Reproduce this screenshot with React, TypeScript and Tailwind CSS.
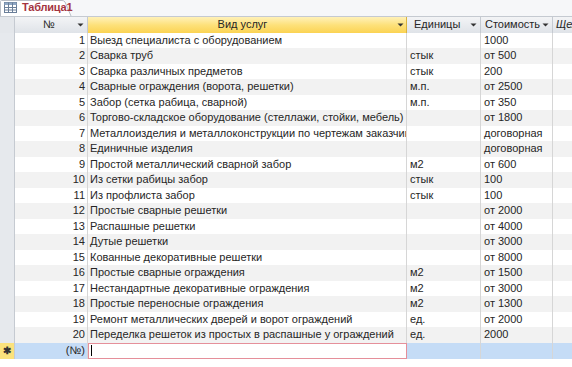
import React from "react";

const rows: [number, string, string, string][] = [
  [1, "Выезд специалиста с оборудованием", "", "1000"],
  [2, "Сварка труб", "стык", "от 500"],
  [3, "Сварка различных предметов", "стык", "200"],
  [4, "Сварные ограждения (ворота, решетки)", "м.п.", "от 2500"],
  [5, "Забор (сетка рабица, сварной)", "м.п.", "от 350"],
  [6, "Торгово-складское оборудование (стеллажи, стойки, мебель)", "", "от 1800"],
  [7, "Металлоизделия и металлоконструкции по чертежам заказчика", "", "договорная"],
  [8, "Единичные изделия", "", "договорная"],
  [9, "Простой металлический сварной забор", "м2", "от 600"],
  [10, "Из сетки рабицы забор", "стык", "100"],
  [11, "Из профлиста забор", "стык", "100"],
  [12, "Простые сварные решетки", "", "от 2000"],
  [13, "Распашные решетки", "", "от 4000"],
  [14, "Дутые решетки", "", "от 3000"],
  [15, "Кованные декоративные решетки", "", "от 8000"],
  [16, "Простые сварные ограждения", "м2", "от 1500"],
  [17, "Нестандартные декоративные ограждения", "м2", "от 3000"],
  [18, "Простые переносные ограждения", "м2", "от 1300"],
  [19, "Ремонт металлических дверей и ворот ограждений", "ед.", "от 2000"],
  [20, "Переделка решеток из простых в распашные у ограждений", "ед.", "2000"],
];

const cols = "grid grid-cols-[15px_73px_319px_74px_72px_1fr]";

function Arrow() {
  return (
    <svg width="7" height="4" viewBox="0 0 7 4" className="shrink-0">
      <path d="M0.5 0.5 L6.5 0.5 L3.5 3.5 Z" fill="#333" />
    </svg>
  );
}

export default function App() {
  return (
    <div className="w-[572px] h-[367px] bg-white overflow-hidden font-['Liberation_Sans',Arial,sans-serif] text-[11px] text-[#262626] leading-none">
      {/* tab strip */}
      <div className="h-[16px] bg-[#f6f7f9] flex items-end relative">
        <div className="relative h-[16px] w-[72px]">
          <svg width="72" height="16" className="absolute inset-0">
            <path d="M0.5 16 L0.5 1.5 Q0.5 0.5 1.5 0.5 L62 0.5 Q64 0.5 65 2 L71 16" fill="#ffffff" stroke="#b9bec6" />
          </svg>
          <div className="absolute left-[4px] top-[2px] flex items-center gap-[5px]">
            <svg width="13" height="11" viewBox="0 0 13 11">
              <rect x="0.5" y="0.5" width="12" height="10" fill="#fff" stroke="#6b7f99" />
              <rect x="0.5" y="0.5" width="12" height="2.5" fill="#8fa7c4" />
              <path d="M0.5 5.5 H12.5 M0.5 8 H12.5 M4.5 0.5 V10.5 M8.5 0.5 V10.5" stroke="#6b7f99" strokeWidth="1" />
            </svg>
            <span className="text-[#a4343f] text-[11px] font-bold tracking-[-0.2px]">Таблица1</span>
          </div>
        </div>
      </div>
      {/* header */}
      <div className={`${cols} h-[16.5px] border-t border-[#c5cad1] bg-gradient-to-b from-[#f3f4f6] to-[#dfe3e8]`}>
        <div className="border-r border-[#c5cad1] bg-[#e4e7eb]" />
        <div className="border-r border-[#c5cad1] flex items-center pl-[28px] pr-[3px] justify-between">
          <span>№</span>
          <Arrow />
        </div>
        <div className="border-r border-[#d9b440] bg-gradient-to-b from-[#fff1b8] via-[#fde17a] to-[#fbd352] flex items-center pr-[2px]">
          <span className="flex-1 text-center">Вид услуг</span>
          <Arrow />
        </div>
        <div className="border-r border-[#c5cad1] flex items-center pl-[7px] pr-[3px] justify-between">
          <span>Единицы</span>
          <Arrow />
        </div>
        <div className="border-r border-[#c5cad1] flex items-center pl-[4px] pr-[3px] justify-between overflow-hidden">
          <span className="whitespace-nowrap overflow-hidden">Стоимость у</span>
          <Arrow />
        </div>
        <div className="flex items-center pl-[3px] italic whitespace-nowrap overflow-hidden">Щелкните для добавления</div>
      </div>
      {/* rows */}
      {rows.map(([n, name, unit, price]) => (
        <div key={n} className={`${cols} h-[15.5px] ${n % 2 === 0 ? "bg-[#f2f2f2]" : "bg-white"}`}>
          <div className="bg-[#e6e9ed] border-r border-[#c5cad1]" />
          <div className="border-r border-[#d6d6d6] flex items-center justify-end pr-[2px]">{n}</div>
          <div className="border-r border-[#d6d6d6] flex items-center pl-[2px] whitespace-nowrap overflow-hidden">{name}</div>
          <div className="border-r border-[#d6d6d6] flex items-center pl-[3px]">{unit}</div>
          <div className="border-r border-[#d6d6d6] flex items-center pl-[3px]">{price}</div>
          <div />
        </div>
      ))}
      {/* new row */}
      <div className={`${cols} h-[16px] bg-[#c5dcf6]`}>
        <div className="bg-[#fbe27c] border-r border-[#c5cad1] flex items-center justify-center text-[10px] font-bold text-[#333]">✱</div>
        <div className="border-r border-[#d6d6d6] flex items-center justify-end pr-[2px]">(№)</div>
        <div className="bg-white border border-[#e58f9a] flex items-center pl-[2px]">
          <div className="w-px h-[11px] bg-black" />
        </div>
        <div className="border-r border-[#d6d6d6]" />
        <div className="border-r border-[#d6d6d6]" />
        <div />
      </div>
    </div>
  );
}
